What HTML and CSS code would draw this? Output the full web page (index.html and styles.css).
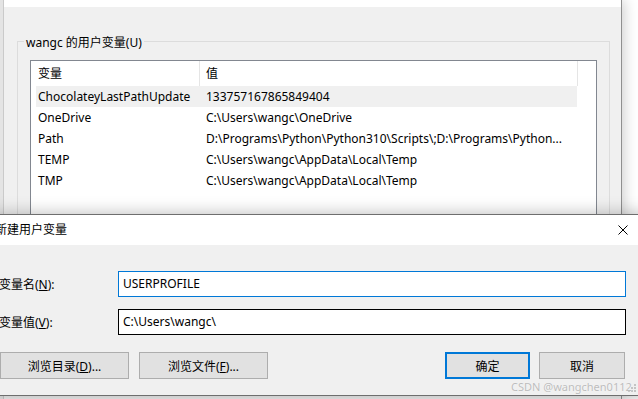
FILE: index.html
```html
<!DOCTYPE html>
<html lang="zh-CN">

<head>
    <meta charset="UTF-8">
    <meta name="viewport" content="width=device-width, initial-scale=1.0">
    <title>新建用户变量</title>
    <link rel="stylesheet" href="styles.css">
</head>

<body>
    <div class="env-window">
        <div class="env-side"></div>
        <div class="env-main">
            <div class="env-top"></div>
            <div class="group">
                <div class="group-label">wangc 的用户变量(U)</div>
                <div class="list">
                    <div class="list-head">
                        <div class="head-name">变量</div>
                        <div class="head-value">值</div>
                    </div>
                    <div class="list-row selected">
                        <div class="cell-name">ChocolateyLastPathUpdate</div>
                        <div class="cell-value">133757167865849404</div>
                    </div>
                    <div class="list-row">
                        <div class="cell-name">OneDrive</div>
                        <div class="cell-value">C:\Users\wangc\OneDrive</div>
                    </div>
                    <div class="list-row">
                        <div class="cell-name">Path</div>
                        <div class="cell-value">D:\Programs\Python\Python310\Scripts\;D:\Programs\Python...</div>
                    </div>
                    <div class="list-row">
                        <div class="cell-name">TEMP</div>
                        <div class="cell-value">C:\Users\wangc\AppData\Local\Temp</div>
                    </div>
                    <div class="list-row">
                        <div class="cell-name">TMP</div>
                        <div class="cell-value">C:\Users\wangc\AppData\Local\Temp</div>
                    </div>
                </div>
            </div>
        </div>
    </div>

    <div class="dialog">
        <div class="dialog-title">
            <span>新建用户变量</span>
            <button class="dialog-close" aria-label="关闭">
                <svg width="10" height="10" viewBox="0 0 10 10">
                    <path d="M0.5 0.5L9.5 9.5M9.5 0.5L0.5 9.5" stroke="#000" stroke-width="1" fill="none" />
                </svg>
            </button>
        </div>
        <div class="dialog-body">
            <div class="field">
                <label for="var-name">变量名(<u>N</u>):</label>
                <input type="text" id="var-name" class="focused" value="USERPROFILE">
            </div>
            <div class="field second">
                <label for="var-value">变量值(<u>V</u>):</label>
                <input type="text" id="var-value" value="C:\Users\wangc\">
            </div>
            <div class="dialog-buttons">
                <button class="btn browse">浏览目录(<u>D</u>)...</button>
                <button class="btn browse">浏览文件(<u>F</u>)...</button>
                <button class="btn ok">确定</button>
                <button class="btn cancel">取消</button>
            </div>
        </div>
        <svg class="size-grip" width="8" height="8" viewBox="0 0 8 8">
            <rect x="6" y="0" width="2" height="2" fill="#c4c4c4" />
            <rect x="3" y="3" width="2" height="2" fill="#c4c4c4" />
            <rect x="6" y="3" width="2" height="2" fill="#c4c4c4" />
            <rect x="0" y="6" width="2" height="2" fill="#c4c4c4" />
            <rect x="3" y="6" width="2" height="2" fill="#c4c4c4" />
            <rect x="6" y="6" width="2" height="2" fill="#c4c4c4" />
        </svg>
    </div>

    <div class="watermark">CSDN @wangchen0112</div>
</body>

</html>
```

FILE: styles.css
```css
body {
    margin: 0;
    width: 638px;
    height: 399px;
    overflow: hidden;
    position: relative;
    background: #fff;
    font-family: "Noto Sans", "Noto Sans CJK SC", sans-serif;
    font-size: 12px;
    color: #000;
}

/* background window: environment variables */
.env-window {
    display: flex;
    width: 622px;
    height: 399px;
    box-sizing: border-box;
    overflow: hidden;
    background: #f0f0f0;
    border-right: 1px solid #8f8f8f;
    box-shadow: 3px 0 12px rgba(0, 0, 0, 0.18);
}

.env-side {
    width: 3px;
    background: #e4e4e4;
    border-right: 1px solid #cacaca;
}

.env-main {
    flex: 1;
    min-width: 0;
}

.env-top {
    height: 7px;
    background: #fff;
}

.group {
    margin: 34px 11px 0 13px;
    height: 352px;
    border: 1px solid #dcdcdc;
}

.group-label {
    width: fit-content;
    margin: -8px 0 0 6px;
    padding: 0 2px;
    line-height: 18px;
    background: #f0f0f0;
}

.list {
    margin: 8px 12px 0 12px;
    height: 330px;
    border: 1px solid #828790;
    background: #fff;
}

.list-head {
    display: flex;
    width: 547px;
    height: 25px;
    box-sizing: border-box;
    border-right: 1px solid #e5e5e5;
    line-height: 25px;
}

.head-name {
    width: 169px;
    box-sizing: border-box;
    padding-left: 7px;
    border-right: 1px solid #e5e5e5;
}

.head-value {
    padding-left: 6px;
}

.list-row {
    display: flex;
    width: 541px;
    height: 21px;
    margin-left: 5px;
    line-height: 21px;
    white-space: nowrap;
}

.list-row.selected {
    background: #f0f0f0;
}

.cell-name {
    width: 170px;
    flex-shrink: 0;
    box-sizing: border-box;
    padding-left: 2px;
}

.cell-value {
    overflow: hidden;
}

/* foreground dialog */
.dialog {
    position: absolute;
    left: -7px;
    top: 214px;
    width: 658px;
    height: 182px;
    box-sizing: border-box;
    border: 1px solid #6e6e6e;
    background: #f0f0f0;
    box-shadow: 0 0 16px rgba(0, 0, 0, 0.28);
}

.dialog-title {
    display: flex;
    align-items: center;
    justify-content: space-between;
    height: 30px;
    padding-left: 1px;
    background: #fff;
    line-height: 30px;
}

.dialog-close {
    display: flex;
    align-items: center;
    justify-content: center;
    width: 46px;
    height: 30px;
    margin-right: 4px;
    padding: 0;
    border: none;
    background: transparent;
}

.dialog-body {
    padding: 26px 0 0 5px;
}

.field {
    display: grid;
    grid-template-columns: 119px 508px;
    align-items: center;
    height: 26px;
}

.field.second {
    margin-top: 12px;
}

.field input {
    height: 26px;
    box-sizing: border-box;
    margin: 0;
    padding: 0 3px 2px 4px;
    border: 1px solid #000;
    background: #fff;
    font: inherit;
    color: #000;
    outline: none;
}

.field input.focused {
    border-color: #0078d7;
}

.dialog-buttons {
    display: flex;
    margin-top: 17px;
    padding-right: 25px;
}

.btn {
    height: 27px;
    box-sizing: border-box;
    padding: 0;
    border: 1px solid #adadad;
    background: #e1e1e1;
    font: inherit;
    color: #000;
}

.btn.browse {
    width: 129px;
    margin-left: 10px;
}

.btn.browse:first-child {
    margin-left: 1px;
}

.btn.ok {
    width: 85px;
    margin-left: auto;
    border: 2px solid #0078d7;
}

.btn.cancel {
    width: 86px;
    margin-left: 9px;
}

.size-grip {
    position: absolute;
    right: 14px;
    bottom: 3px;
}

.watermark {
    position: absolute;
    left: 511px;
    top: 380px;
    line-height: 14px;
    font-size: 11px;
    color: #bcbcbc;
    text-shadow: 0 0 1px #fff;
    white-space: nowrap;
}
```
